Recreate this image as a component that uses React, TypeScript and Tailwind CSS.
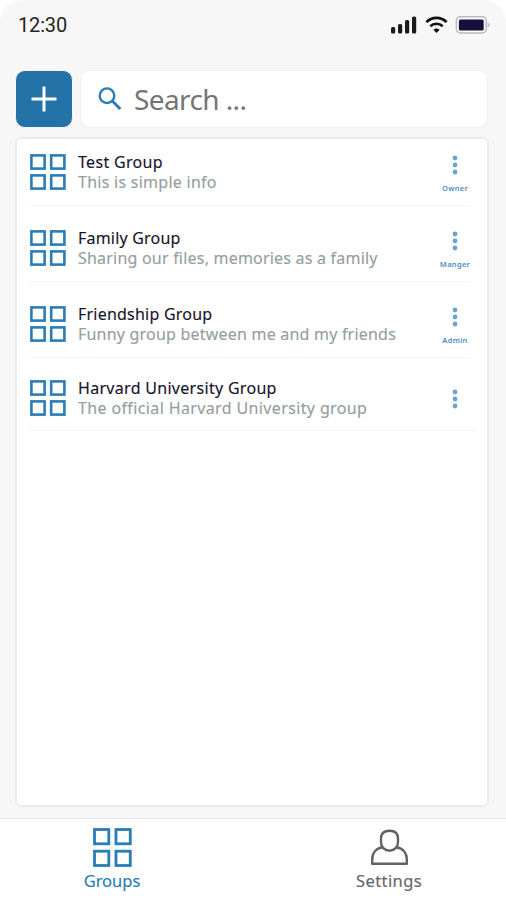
import clsx from "clsx";

interface Group {
  name: string;
  info: string;
  role?: string;
  row: string;
  nameSpacing: string;
  infoSpacing: string;
}

const groups: Group[] = [
  {
    name: "Test Group",
    info: "This is simple info",
    role: "Owner",
    row: "mr-[17px] h-[67px] pt-[15px]",
    nameSpacing: "tracking-[0.32px]",
    infoSpacing: "tracking-[0.26px]",
  },
  {
    name: "Family Group",
    info: "Sharing our files, memories as a family",
    role: "Manger",
    row: "mr-[17px] h-[76px] pt-[24px]",
    nameSpacing: "tracking-[0.2px]",
    infoSpacing: "tracking-[0.21px]",
  },
  {
    name: "Friendship Group",
    info: "Funny group between me and my friends",
    role: "Admin",
    row: "mr-[17px] h-[76px] pt-[24px]",
    nameSpacing: "tracking-[0.22px]",
    infoSpacing: "tracking-[0.21px]",
  },
  {
    name: "Harvard University Group",
    info: "The official Harvard University group",
    row: "mr-[11px] h-[73px] pt-[22px]",
    nameSpacing: "tracking-[0.3px]",
    infoSpacing: "tracking-[0.37px]",
  },
];

function GroupIcon({ size = 36 }: { size?: number }) {
  return (
    <svg width={size} height={size} viewBox="0 0 36 36" fill="none" stroke="#2a7db6" strokeWidth="2.6" className="shrink-0">
      <rect x="1.4" y="1.4" width="13.2" height="13.2" />
      <rect x="21.2" y="1.4" width="13.2" height="13.2" />
      <rect x="1.4" y="21.4" width="13.2" height="13.2" />
      <rect x="21.2" y="21.4" width="13.2" height="13.2" />
    </svg>
  );
}

function StatusBar() {
  return (
    <div className="flex h-[50px] shrink-0 items-center justify-between pl-[18px] pr-[15px]">
      <span className="font-['Roboto',sans-serif] text-[20px] leading-none tracking-[-0.15px] text-[#252525]">12:30</span>
      <div className="flex items-center">
        <svg width="28" height="20" viewBox="0 0 28 20" fill="#1b1b1e">
          <rect x="1" y="12" width="4.2" height="6.6" rx="1.6" />
          <rect x="8" y="9" width="4.2" height="9.6" rx="1.6" />
          <rect x="15" y="5" width="4.2" height="13.6" rx="1.6" />
          <rect x="22" y="1.4" width="4.2" height="17.2" rx="1.6" />
        </svg>
        <svg width="24" height="20" viewBox="0 0 24 20" fill="none" stroke="#111" strokeWidth="2.7" className="ml-[7px]">
          <path d="M1.4 7.1a14.2 14.2 0 0 1 20.2 0" />
          <path d="M5.3 11.3a8.8 8.8 0 0 1 12.4 0" />
          <path d="M8.4 14.8a4.6 4.6 0 0 1 6.2 0L11.5 18Z" fill="#111" stroke="none" />
        </svg>
        <svg width="36" height="20" viewBox="0 0 36 20" className="ml-[6px]">
          <rect x="1.4" y="1.8" width="29.8" height="16.2" rx="4" fill="#fafafa" stroke="#bcbac4" strokeWidth="1.5" />
          <rect x="3.9" y="4.4" width="24.8" height="11.2" rx="1.6" fill="#17103a" />
          <path d="M32.6 7.2q4 2.8 0 5.6z" fill="#bcbac4" />
        </svg>
      </div>
    </div>
  );
}

function GroupRow({ group }: { group: Group }) {
  return (
    <div className={clsx("ml-[13px] flex shrink-0 items-start border-b border-[#f3f4f4]", group.row)}>
      <GroupIcon />
      <div className="ml-[12px] w-[358px] shrink-0 whitespace-nowrap text-[16px] leading-[20px] [font-variant-ligatures:none] [-webkit-text-stroke:0.15px]">
        <p className={clsx("-mt-[2px] text-[#17152b]", group.nameSpacing)}>{group.name}</p>
        <p className={clsx("text-[#95a09f]", group.infoSpacing)}>{group.info}</p>
      </div>
      <div className="flex w-[38px] shrink-0 flex-col items-center">
        <svg
          width="6"
          height="22"
          viewBox="0 0 6 22"
          fill="#68a5cc"
          className={group.role ? "mt-px" : "mt-[9px]"}
        >
          <circle cx="3" cy="3" r="2.4" />
          <circle cx="3" cy="10" r="2.4" />
          <circle cx="3" cy="17" r="2.4" />
        </svg>
        {group.role && (
          <span className="mt-[6px] text-[7.5px] font-semibold leading-[10px] tracking-[0.3px] text-[#4f8cc2]">{group.role}</span>
        )}
      </div>
    </div>
  );
}

export default function App() {
  return (
    <div className="h-[900px] w-[506px] overflow-hidden bg-white font-['Noto_Sans',sans-serif]">
      <div className="flex h-full flex-col rounded-t-[22px] bg-[#f7f7f7]">
        <StatusBar />

        <div className="mt-5 flex h-[58px] shrink-0 gap-[7px] pl-[15px] pr-[18px]">
          <button className="flex w-[58px] items-center justify-center rounded-[10px] border border-[#f1f3f4] bg-[#2372a8]">
            <svg width="26" height="26" viewBox="0 0 26 26" stroke="#fff" strokeWidth="3">
              <path d="M13 0.5v25M0.5 13h25" />
            </svg>
          </button>
          <div className="flex flex-1 items-center rounded-[10px] border border-[#f1f1f1] bg-white pl-[17px]">
            <svg width="24" height="24" viewBox="0 0 24 24" fill="none" stroke="#2a7db6" strokeWidth="2.4">
              <circle cx="9" cy="8.7" r="7.3" />
              <path d="M14.3 14L22.3 22" strokeWidth="3" />
            </svg>
            <span className="ml-[12px] text-[28px] leading-none tracking-[-0.6px] text-[#757575]">Search ...</span>
          </div>
        </div>

        <div className="ml-[15px] mr-[17px] mt-[9px] flex h-[670px] shrink-0 flex-col rounded-[6px] border-2 border-[#ececec] bg-white">
          {groups.map((group) => (
            <GroupRow key={group.name} group={group} />
          ))}
        </div>

        <nav className="mt-[11px] flex flex-1 border-t border-[#e4e4e4] bg-white text-[16.5px] leading-[20px] [-webkit-text-stroke:0.15px]">
          <div className="ml-[52px] flex w-[120px] flex-col items-center pt-[9px] text-[#2a7db3]">
            <GroupIcon size={39} />
            <span className="mt-[4px]">Groups</span>
          </div>
          <div className="ml-[157px] flex w-[120px] flex-col items-center pt-[9px] text-[#66686b]">
            <svg width="40" height="39" viewBox="0 0 40 39" fill="none" stroke="#606266" strokeWidth="2.4" strokeLinejoin="round">
              <path d="M20.5 2.7c-5.8 0-8.5 3-8.5 8v3.3c0 4.9 3.3 8.7 8.5 8.7s8.5-3.8 8.5-8.7v-3.3c0-5-2.7-8-8.5-8Z" />
              <path d="M13.7 19.3C7.2 20.2 3.2 24.8 3.2 31.5v4.2h34.6v-4.2c0-6.7-4-11.3-10.5-12.2" />
            </svg>
            <span className="mt-[4px] tracking-[0.4px]">Settings</span>
          </div>
        </nav>
      </div>
    </div>
  );
}
